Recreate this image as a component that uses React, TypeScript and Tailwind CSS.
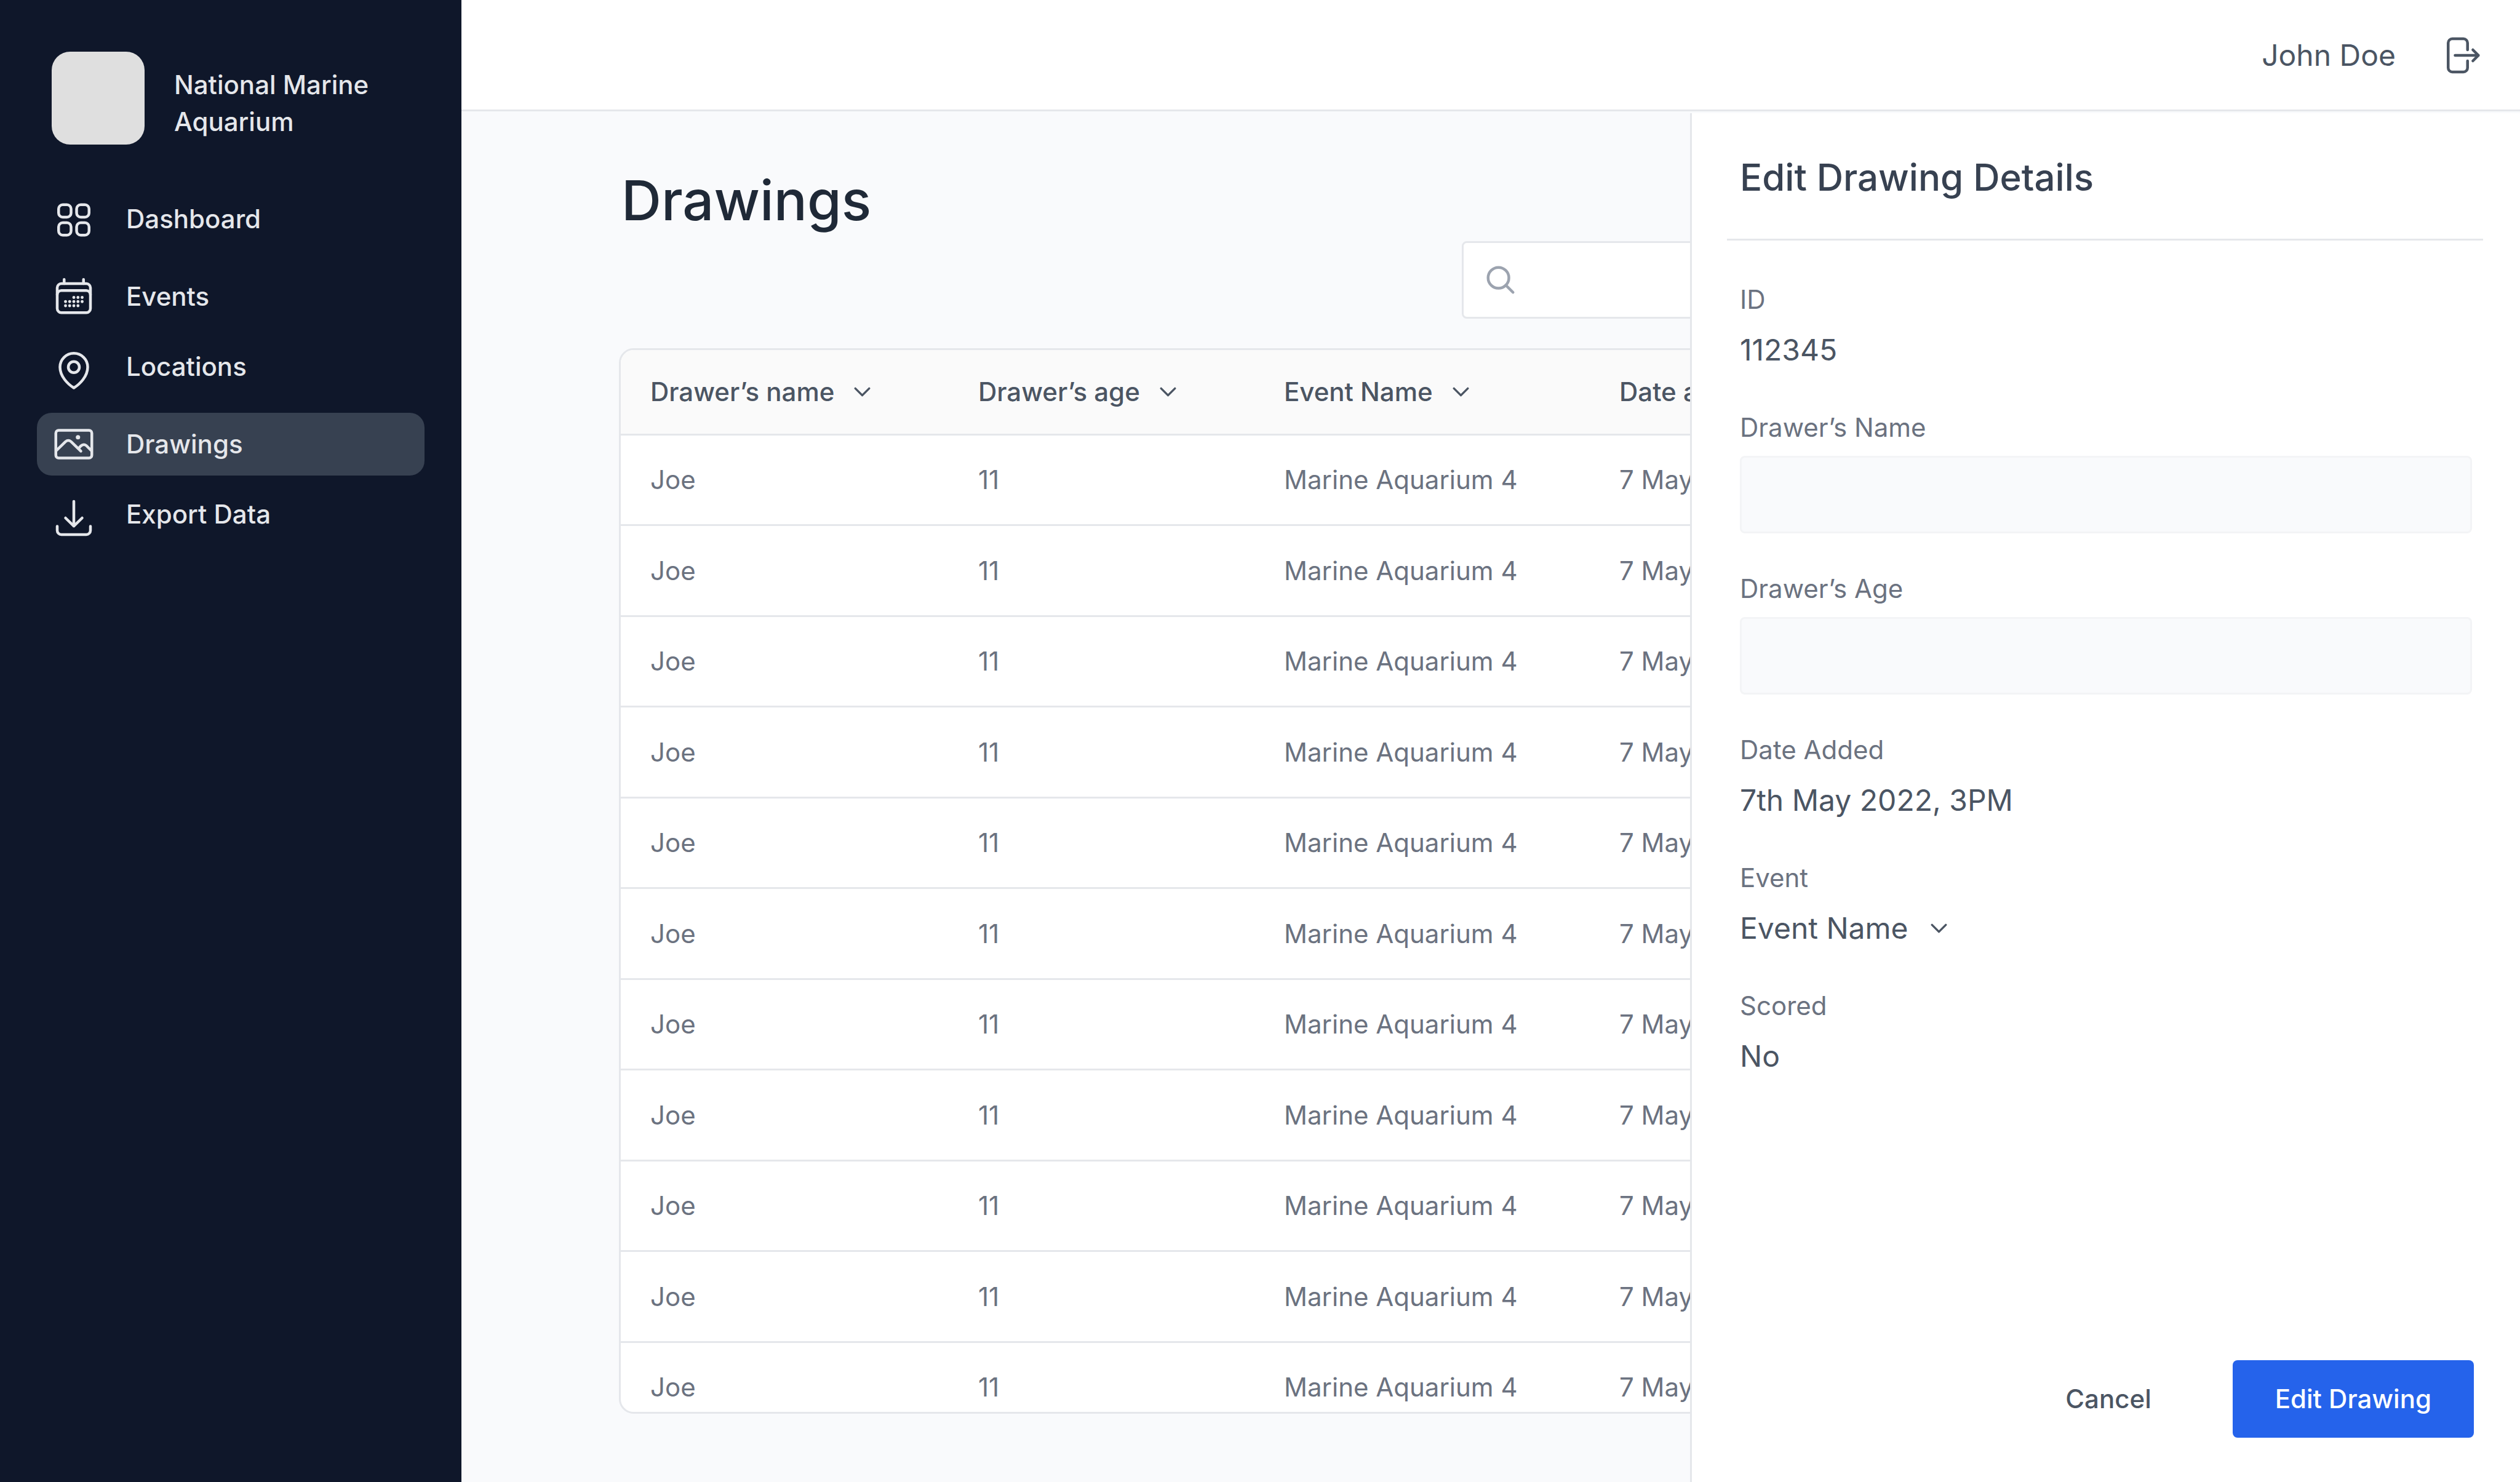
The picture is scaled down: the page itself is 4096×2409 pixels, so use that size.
import type { ReactNode } from "react";

/* Line icons share a 96-unit canvas whose origin is its centre. */
function Icon({ children }: { children: ReactNode }) {
  return (
    <svg
      viewBox="-48 -48 96 96"
      className="size-[72px] shrink-0"
      fill="none"
      stroke="currentColor"
      strokeWidth={6}
      strokeLinecap="round"
      strokeLinejoin="round"
      aria-hidden="true"
    >
      {children}
    </svg>
  );
}

function Chevron() {
  return (
    <svg
      viewBox="-18 -12 36 24"
      className="h-[18px] w-[27px] shrink-0"
      fill="none"
      stroke="currentColor"
      strokeWidth={4.5}
      strokeLinecap="round"
      strokeLinejoin="round"
      aria-hidden="true"
    >
      <path d="M-15 -7.5 L0 7.5 L15 -7.5" />
    </svg>
  );
}

function DashboardIcon() {
  return (
    <Icon>
      <rect x="-33" y="-39" width="27" height="27" rx="9" />
      <rect x="6" y="-39" width="27" height="27" rx="9" />
      <rect x="-33" y="0" width="27" height="27" rx="9" />
      <rect x="6" y="0" width="27" height="27" rx="9" />
    </Icon>
  );
}

const calendarDots = [
  [0, 2], [9, 2], [18, 2],
  [-18, 11], [-9, 11], [0, 11], [9, 11], [18, 11],
  [-18, 20], [-9, 20], [0, 20], [9, 20],
];

function EventsIcon() {
  return (
    <Icon>
      <path d="M-21 -37 V-28 M21 -37 V-28" />
      <rect x="-36" y="-28" width="72" height="63" rx="9" />
      <path d="M-36 -4 A9 9 0 0 1 -27 -13 H27 A9 9 0 0 1 36 -4" />
      <g fill="currentColor" stroke="none">
        {calendarDots.map(([x, y]) => (
          <circle key={`${x},${y}`} cx={x} cy={y} r="3.2" />
        ))}
      </g>
    </Icon>
  );
}

function LocationsIcon() {
  return (
    <Icon>
      <path d="M0 38 C-13 30 -30 13 -30 -7 A30 30 0 0 1 30 -7 C30 13 13 30 0 38 Z" />
      <circle cx="0" cy="-7" r="12" />
    </Icon>
  );
}

function DrawingsIcon() {
  return (
    <Icon>
      <rect x="-39" y="-30" width="78" height="60" rx="6" />
      <path d="M-38 14 L-18 -5.5 Q-12 -10.5 -6 -5.5 L15.3 15.3" />
      <path d="M10.5 9 L15 4 Q21 -1.5 27 3 L38 14" />
      <circle cx="9" cy="-15" r="4.7" fill="currentColor" stroke="none" />
    </Icon>
  );
}

function ExportIcon() {
  return (
    <Icon>
      <path d="M0 -36 V17.5 M-18 0 L0 17.5 L18 0" />
      <path d="M-36 18 V27 A9 9 0 0 0 -27 36 H27 A9 9 0 0 0 36 27 V18" />
    </Icon>
  );
}

function LogoutIcon() {
  return (
    <Icon>
      <path d="M9 -12 V-27 A9 9 0 0 0 0 -36 H-24 A9 9 0 0 0 -33 -27 V27 A9 9 0 0 0 -24 36 H0 A9 9 0 0 0 9 27 V12" />
      <path d="M-18 0 H32.5 M20.5 -12 L32.5 0 L20.5 12" />
    </Icon>
  );
}

function SearchIcon() {
  return (
    <Icon>
      <circle cx="-4.5" cy="-4.5" r="22.5" />
      <path d="M11.5 11.5 L27 27" />
    </Icon>
  );
}

const navItems = [
  { label: "Dashboard", icon: <DashboardIcon />, labelClass: "pb-3" },
  { label: "Events", icon: <EventsIcon />, labelClass: "" },
  { label: "Locations", icon: <LocationsIcon />, labelClass: "pb-3" },
  { label: "Drawings", icon: <DrawingsIcon />, labelClass: "", active: true },
  { label: "Export Data", icon: <ExportIcon />, labelClass: "pb-3" },
];

function Sidebar() {
  return (
    <aside className="w-[750px] shrink-0 bg-[#0f172a] px-[60px] text-[42px] leading-[60px] font-medium text-[#e5e7eb]">
      <div className="flex gap-12 pt-[84px] pl-6">
        <div className="size-[151px] shrink-0 rounded-[30px] bg-[#dfdfdf]" />
        <p className="pt-6">
          National Marine
          <br />
          Aquarium
        </p>
      </div>
      <nav className="mt-[76px]">
        <ul className="flex flex-col gap-[18px]">
          {navItems.map((item) => (
            <li key={item.label}>
              <a
                href="#"
                aria-current={item.active ? "page" : undefined}
                className={
                  item.active
                    ? "flex h-[102px] items-center gap-[49px] rounded-3xl bg-[#374151] pl-6"
                    : "flex h-[102px] items-center gap-[49px] rounded-3xl pl-6"
                }
              >
                {item.icon}
                <span className={item.labelClass}>{item.label}</span>
              </a>
            </li>
          ))}
        </ul>
      </nav>
    </aside>
  );
}

function Header() {
  return (
    <header className="flex shrink-0 items-center justify-end gap-[74px] border-b-[3px] border-[#e5e7eb] bg-white pt-[54px] pr-14 pb-[52px] text-[48px] leading-[72px] text-[#4b5563]">
      <span>John Doe</span>
      <button type="button" aria-label="Log out">
        <LogoutIcon />
      </button>
    </header>
  );
}

const rows = Array.from({ length: 11 }, (_, id) => ({
  id,
  name: "Joe",
  age: "11",
  event: "Marine Aquarium 4",
  date: "7 May",
}));

const columns = ["Drawer’s name", "Drawer’s age", "Event Name", "Date added"];

function DrawingsTable() {
  return (
    <div className="mt-12 min-h-0 flex-1 overflow-hidden rounded-3xl border-[3px] border-[#e5e7eb] bg-white">
      <table className="w-full table-fixed border-separate border-spacing-0 text-left text-[42px] leading-[60px]">
        <colgroup>
          <col className="w-[533px]" />
          <col className="w-[497px]" />
          <col className="w-[545px]" />
          <col />
        </colgroup>
        <thead>
          <tr className="h-[139px] bg-[#fafafa] text-[#4b5563]">
            {columns.map((column) => (
              <th key={column} scope="col" className="border-b-[3px] border-[#e5e7eb] py-0 pr-0 pl-12 font-medium">
                <button type="button" className="flex items-center gap-8 whitespace-nowrap">
                  {column}
                  <Chevron />
                </button>
              </th>
            ))}
          </tr>
        </thead>
        <tbody>
          {rows.map((row) => (
            <tr key={row.id} className="h-[147px] text-[#6b7280] even:h-[148px]">
              <td className="border-b-[3px] border-[#e5e7eb] py-0 pr-0 pl-12">{row.name}</td>
              <td className="border-b-[3px] border-[#e5e7eb] py-0 pr-0 pl-12">{row.age}</td>
              <td className="border-b-[3px] border-[#e5e7eb] py-0 pr-0 pl-12">{row.event}</td>
              <td className="border-b-[3px] border-[#e5e7eb] py-0 pr-0 pl-12">{row.date}</td>
            </tr>
          ))}
        </tbody>
      </table>
    </div>
  );
}

function ReadOnlyField({ label, value }: { label: string; value: string }) {
  return (
    <div className="flex flex-col gap-4">
      <span className="text-[42px] leading-[60px] text-[#6b7280]">{label}</span>
      <span className="text-[48px] leading-[72px] text-[#4b5563]">{value}</span>
    </div>
  );
}

function TextField({ id, label }: { id: string; label: string }) {
  return (
    <div className="flex flex-col gap-4">
      <label htmlFor={id} className="text-[42px] leading-[60px] text-[#6b7280]">
        {label}
      </label>
      <input
        id={id}
        type="text"
        className="h-[126px] w-full rounded-lg border-[3px] border-[#f3f4f6] bg-[#f9fafc] px-6 text-[48px] text-[#4b5563]"
      />
    </div>
  );
}

function EditPanel() {
  return (
    <aside className="absolute top-[3px] right-0 bottom-0 flex w-[1349px] flex-col border-l-[3px] border-[#e5e7eb] bg-white">
      <div className="mr-[60px] ml-[57px] border-b-[3px] border-[#e5e7eb] pt-[62px] pb-[58px] pl-[21px]">
        <h2 className="text-[60px] leading-[84px] font-medium text-[#374151]">Edit Drawing Details</h2>
      </div>
      <form className="flex flex-1 flex-col pt-[66px] pr-[75px] pb-[72px] pl-[78px]">
        <div className="flex flex-col gap-[60px] pr-[3px]">
          <ReadOnlyField label="ID" value="112345" />
          <TextField id="drawer-name" label="Drawer’s Name" />
          <TextField id="drawer-age" label="Drawer’s Age" />
          <ReadOnlyField label="Date Added" value="7th May 2022, 3PM" />
          <div className="flex flex-col gap-4">
            <label htmlFor="event" className="text-[42px] leading-[60px] text-[#6b7280]">
              Event
            </label>
            <div className="flex items-center gap-9 text-[48px] leading-[72px] text-[#4b5563]">
              <select id="event" className="h-[72px] appearance-none bg-transparent">
                <option>Event Name</option>
              </select>
              <Chevron />
            </div>
          </div>
          <ReadOnlyField label="Scored" value="No" />
        </div>
        <div className="mt-auto flex justify-end gap-[66px] text-[42px] leading-[60px] font-medium">
          <button type="button" className="h-[126px] px-[66px] text-[#4b5563]">
            Cancel
          </button>
          <button type="submit" className="h-[126px] rounded-lg bg-[#2563eb] px-[69px] text-white">
            Edit Drawing
          </button>
        </div>
      </form>
    </aside>
  );
}

export default function App() {
  return (
    <div className="flex h-screen overflow-hidden font-['Inter',sans-serif]">
      <Sidebar />
      <div className="flex min-w-0 flex-1 flex-col">
        <Header />
        <div className="relative flex min-h-0 flex-1 flex-col bg-[#f9fafc]">
          <main className="flex min-h-0 flex-1 flex-col px-64 pt-[91px] pb-[111px]">
            <h1 className="pl-1 text-[90px] leading-[108px] font-medium text-[#1f2937]">Drawings</h1>
            <label className="mt-3 flex h-[126px] w-[1464px] shrink-0 items-center self-end rounded-lg border-[3px] border-[#e5e7eb] bg-white px-6 text-[#9ca3af]">
              <SearchIcon />
              <input type="search" aria-label="Search drawings" className="min-w-0 flex-1 text-[42px] text-[#4b5563] outline-none" />
            </label>
            <DrawingsTable />
          </main>
          <EditPanel />
        </div>
      </div>
    </div>
  );
}
